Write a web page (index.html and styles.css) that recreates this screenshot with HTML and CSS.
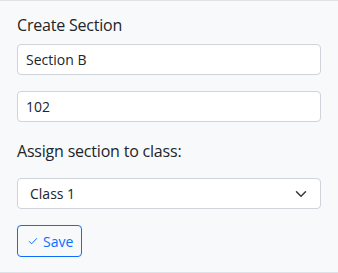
FILE: index.html
```html
<!DOCTYPE html>
<html>
<head>
<meta charset="utf-8">
<link rel="stylesheet" href="styles.css">
</head>
<body>
<div class="card">
  <h5 class="title">Create Section</h5>
  <input class="field" type="text" value="Section B">
  <input class="field field-last" type="text" value="102">
  <label class="label">Assign section to class:</label>
  <div class="select-wrap">
    <div class="select">Class 1</div>
    <svg class="chevron" width="16" height="12" viewBox="0 0 16 16"><path d="m2 5 6 6 6-6" fill="none" stroke="#343a40" stroke-width="2" stroke-linecap="round" stroke-linejoin="round"/></svg>
  </div>
  <button class="btn"><svg class="check" width="10" height="10" viewBox="0 0 10 10"><path d="M1 5.2 3.6 7.8 9 2.2" fill="none" stroke="#0d6efd" stroke-width="1"/></svg><span>Save</span></button>
</div>
</body>
</html>
```
FILE: styles.css
```css
* { box-sizing: border-box; }
html, body { margin: 0; padding: 0; background: #fff; }
body { font-family: "Open Sans", "Noto Sans", sans-serif; color: #212529; }
.card {
  width: 338px;
  height: 273px;
  background: #f8f9fa;
  border-top: 1px solid #dee2e6;
  border-bottom: 1px solid #dee2e6;
  padding: 14px 17px 0 17px;
  display: flex;
  flex-direction: column;
  align-items: flex-start;
}
.title {
  margin: 0 0 8px 0;
  font-size: 16px;
  line-height: 21px;
  letter-spacing: -0.2px;
  font-weight: 400;
}
.field {
  display: block;
  width: 304px;
  height: 31px;
  margin: 0 0 16px 0;
  padding: 0 8px;
  font-family: inherit;
  font-size: 14px;
  color: #212529;
  background: #fff;
  border: 1px solid #ced4da;
  border-radius: 4px;
  outline: none;
}
.field-last { margin-bottom: 19px; }
.label {
  display: block;
  font-size: 16px;
  line-height: 21px;
  letter-spacing: -0.2px;
  margin: 0 0 16px 0;
}
.select-wrap {
  position: relative;
  width: 304px;
  margin-bottom: 16px;
}
.select {
  height: 31px;
  display: flex;
  align-items: center;
  padding: 0 36px 0 12px;
  font-size: 14px;
  background: #fff;
  border: 1px solid #ced4da;
  border-radius: 4px;
}
.chevron {
  position: absolute;
  right: 12px;
  top: 10px;
}
.btn {
  display: inline-flex;
  align-items: center;
  gap: 5px;
  height: 32px;
  width: 65px;
  padding: 0 8px 0 10px;
  font-family: inherit;
  font-size: 14px;
  color: #0d6efd;
  background: transparent;
  border: 1px solid #0d6efd;
  border-radius: 4px;
}
.check { flex: none; }
```
